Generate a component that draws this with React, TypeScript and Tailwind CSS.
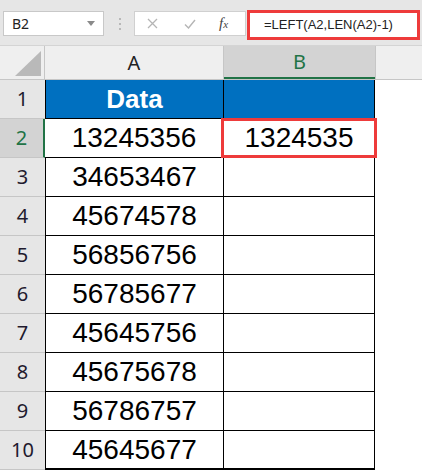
import React from "react"

const values = [
  "13245356",
  "34653467",
  "45674578",
  "56856756",
  "56785677",
  "45645756",
  "45675678",
  "56786757",
  "45645677",
]

const sans = { fontFamily: '"Liberation Sans", Arial, sans-serif' }
const ui = { fontFamily: '"Noto Sans", "Liberation Sans", sans-serif' }

export default function App() {
  return (
    <div className="w-[422px] h-[472px] overflow-hidden bg-white" style={sans}>
      {/* formula bar */}
      <div className="flex items-start h-[46px] bg-[#e6e6e6] border-b border-[#d4d4d4]">
        <div className="ml-[3px] mt-[11px] w-[101px] h-[25px] bg-white border border-[#c8c8c8] flex items-center justify-between pl-[8px] pr-[8px]">
          <span className="text-[14px] text-[#222]" style={ui}>B2</span>
          <svg width="8" height="5" viewBox="0 0 8 5">
            <path d="M0 0 L8 0 L4 5 Z" fill="#8a8a8a" />
          </svg>
        </div>
        <div className="mt-[18px] ml-[15px] flex flex-col gap-[3px]">
          <span className="w-[2px] h-[2px] bg-[#b8b8b8]" />
          <span className="w-[2px] h-[2px] bg-[#b8b8b8]" />
          <span className="w-[2px] h-[2px] bg-[#b8b8b8]" />
        </div>
        <div className="ml-[13px] mt-[11px] w-[112px] h-[25px] bg-white border border-[#d0d0d0] flex items-center">
          <svg className="ml-[12px]" width="11" height="11" viewBox="0 0 11 11">
            <path d="M1 1 L10 10 M10 1 L1 10" stroke="#b5b5b5" strokeWidth="1.3" />
          </svg>
          <svg className="ml-[26px]" width="12" height="10" viewBox="0 0 12 10">
            <path d="M1 5.5 L4.5 9 L11 1" stroke="#b5b5b5" strokeWidth="1.4" fill="none" />
          </svg>
          <span className="ml-[23px] text-[15px] italic text-[#444]" style={{ fontFamily: '"Liberation Serif", serif' }}>
            f<span className="text-[11px]">x</span>
          </span>
        </div>
        <div className="ml-[1px] mt-[10px] w-[173px] h-[30px] bg-white border-[3px] border-[#ee3b3b] flex items-center pl-[14px]">
          <span className="text-[13px] text-[#222]" style={sans}>=LEFT(A2,LEN(A2)-1)</span>
        </div>
      </div>

      {/* column headers */}
      <div className="flex h-[34px] bg-[#efefef] border-b border-[#c6c6c6]">
        <div className="w-[45px] border-r border-[#c6c6c6] flex items-end justify-end pr-[3px] pb-[3px]">
          <svg width="26" height="25" viewBox="0 0 26 25">
            <path d="M26 0 L26 25 L0 25 Z" fill="#b9b9b9" />
          </svg>
        </div>
        <div className="w-[179px] border-r border-[#c6c6c6] flex items-center justify-center text-[20px] text-[#222]" style={ui}>
          A
        </div>
        <div className="w-[151px] bg-[#d3d3d3] border-b-2 border-[#217346] flex items-center justify-center text-[20px] text-[#217346]" style={ui}>
          B
        </div>
        <div className="flex-1 border-l border-[#c6c6c6]" />
      </div>

      {/* row 1 */}
      <div className="flex h-[39px]">
        <div className="w-[45px] bg-[#e6e6e6] border-b border-[#c6c6c6] flex items-center justify-center text-[20px] text-[#1f1a2e]" style={ui}>
          1
        </div>
        <div className="w-[179px] bg-[#0070c0] border-l border-b border-r border-black flex items-center justify-center text-[26px] font-bold text-white">
          Data
        </div>
        <div className="w-[151px] bg-[#0070c0] border-b border-r border-black" />
      </div>

      {values.map((v, i) => {
        const n = i + 2
        const active = n === 2
        return (
          <div key={n} className="flex h-[39px]">
            <div
              className={
                active
                  ? "w-[45px] bg-[#d3d3d3] border-b border-[#c6c6c6] border-r-2 border-r-[#217346] flex items-center justify-center text-[20px] text-[#217346]"
                  : "w-[45px] bg-[#e6e6e6] border-b border-[#c6c6c6] flex items-center justify-center text-[20px] text-[#1f1a2e]"
              }
              style={ui}
            >
              {n}
            </div>
            <div
              className={
                (active ? "w-[179px]" : "w-[179px] border-l") +
                (n === 10 ? " border-b-2" : " border-b") +
                " border-r border-black flex items-center justify-center text-[28px] text-black"
              }
            >
              {v}
            </div>
            <div
              className={
                "relative w-[151px] border-r border-black flex items-center justify-center text-[28px] text-black" +
                (n === 10 ? " border-b-2" : " border-b")
              }
            >
              {active && (
                <>
                  <span>1324535</span>
                  <div className="absolute -left-[3px] -top-[1px] -right-[3px] -bottom-[1px] border-[3px] border-[#ee3b3b]" />
                </>
              )}
            </div>
          </div>
        )
      })}
    </div>
  )
}
